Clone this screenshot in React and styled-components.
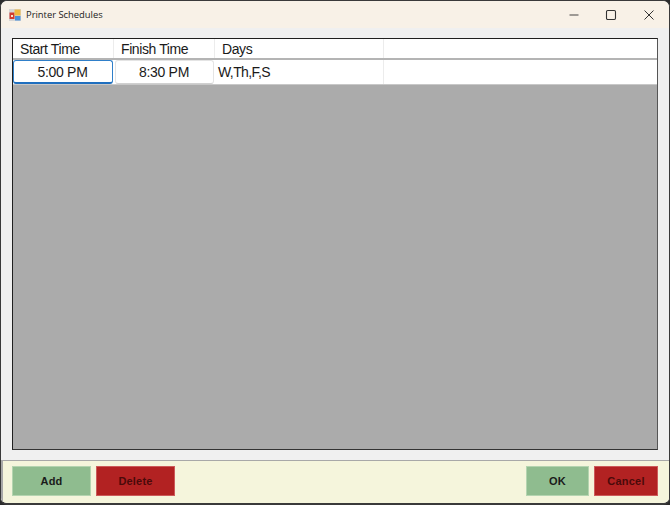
import React from 'react'
import styled, { createGlobalStyle } from 'styled-components'

const GlobalStyle = createGlobalStyle`
  html, body {
    margin: 0;
    padding: 0;
    background: #2b2b2b;
  }
  * {
    box-sizing: border-box;
  }
`

const columns = [
  { title: 'Start Time', width: 101 },
  { title: 'Finish Time', width: 101 },
  { title: 'Days', width: 169 },
  { title: '', width: null },
]

const App = () => {
  return (
    <>
      <GlobalStyle />
      <Window>
        <TitleBar>
          <AppIcon viewBox="0 0 12 12">
            <rect x="0" y="0" width="12" height="12" fill="#d6d6d6" />
            <rect x="0.5" y="3.5" width="5" height="6.5" fill="#d23b2e" />
            <rect x="2" y="6" width="2" height="2" fill="#f5e6d0" />
            <rect x="5.5" y="0.5" width="6" height="6" fill="#f0b840" />
            <rect x="6" y="7" width="5.5" height="4.5" fill="#4a90d9" />
          </AppIcon>
          <WindowTitle>Printer Schedules</WindowTitle>
          <Controls>
            <ControlButton $width={37}>
              <svg width="12" height="12" viewBox="0 0 12 12">
                <path d="M1.5 6h9" stroke="#444" strokeWidth="1.2" fill="none" />
              </svg>
            </ControlButton>
            <ControlButton $width={37}>
              <svg width="12" height="12" viewBox="0 0 12 12">
                <rect x="1.5" y="1.5" width="9" height="9" rx="1.2" stroke="#333" strokeWidth="1.1" fill="none" />
              </svg>
            </ControlButton>
            <ControlButton $width={40}>
              <svg width="12" height="12" viewBox="0 0 12 12">
                <path d="M1.5 1.5l9 9M10.5 1.5l-9 9" stroke="#333" strokeWidth="1" fill="none" />
              </svg>
            </ControlButton>
          </Controls>
        </TitleBar>
        <Body>
          <Grid>
            <HeaderRow>
              {columns.map((col, i) => (
                <HeaderCell key={i} $width={col.width}>
                  {col.title}
                </HeaderCell>
              ))}
            </HeaderRow>
            <DataRow>
              <TimeCell $width={101}>
                <TimeInput $focused>5:00 PM</TimeInput>
              </TimeCell>
              <TimeCell $width={101} $inset>
                <TimeInput>8:30 PM</TimeInput>
              </TimeCell>
              <TextCell $width={169}>W,Th,F,S</TextCell>
              <TextCell />
            </DataRow>
          </Grid>
        </Body>
        <Footer>
          <ButtonGroup>
            <ActionButton $kind="go" $width={79}>Add</ActionButton>
            <ActionButton $kind="stop" $width={79}>Delete</ActionButton>
          </ButtonGroup>
          <ButtonGroup>
            <ActionButton $kind="go" $width={63}>OK</ActionButton>
            <ActionButton $kind="stop" $width={64}>Cancel</ActionButton>
          </ButtonGroup>
        </Footer>
      </Window>
    </>
  )
}

export default App

const Window = styled.div`
  width: 670px;
  height: 505px;
  display: flex;
  flex-direction: column;
  background: #f0f0f0;
  border: 1px solid #3a3a3a;
  border-bottom-width: 2px;
  border-radius: 7px;
  overflow: hidden;
  font-family: "Liberation Sans", Arial, sans-serif;
`
const TitleBar = styled.div`
  height: 27px;
  flex: none;
  display: flex;
  align-items: center;
  padding-left: 8px;
  background: #f8f1e7;
`
const AppIcon = styled.svg`
  width: 12px;
  height: 12px;
  flex: none;
`
const WindowTitle = styled.div`
  margin-left: 5px;
  font-family: "Open Sans", "Liberation Sans", sans-serif;
  font-size: 9.4px;
  color: #222;
`
const Controls = styled.div`
  margin-left: auto;
  display: flex;
`
const ControlButton = styled.div`
  width: ${(p) => p.$width}px;
  height: 27px;
  display: flex;
  align-items: center;
  justify-content: center;
`
const Body = styled.div`
  flex: 1;
  padding: 10px 11px 10px 11px;
  display: flex;
`
const Grid = styled.div`
  flex: 1;
  background: #ababab;
  border: 1px solid #1f1f1f;
  border-right-color: #555;
  border-bottom-color: #333;
`
const HeaderRow = styled.div`
  height: 21px;
  display: flex;
  background: #fff;
  border-bottom: 2px solid #b4b4b4;
`
const HeaderCell = styled.div`
  ${(p) => (p.$width ? `width: ${p.$width}px;` : 'flex: 1;')}
  padding-left: 7px;
  border-right: 1px solid #ececec;
  font-size: 14px;
  letter-spacing: -0.4px;
  line-height: 20px;
  color: #1a1a1a;
  &:last-child {
    border-right: none;
  }
`
const DataRow = styled.div`
  height: 25px;
  display: flex;
  background: #fff;
  border-bottom: 1px solid #c8c8c8;
`
const TimeCell = styled.div`
  width: ${(p) => p.$width}px;
  padding: 0 1px 0 ${(p) => (p.$inset ? 1 : 0)}px;
  display: flex;
`
const TimeInput = styled.div`
  flex: 1;
  display: flex;
  align-items: center;
  justify-content: center;
  padding-right: 1px;
  font-size: 14px;
  letter-spacing: -0.3px;
  color: #1a1a1a;
  border: 1px solid ${(p) => (p.$focused ? '#2f7fc9' : '#e4e4e4')};
  border-bottom: ${(p) => (p.$focused ? '2px solid #1f6fbf' : '1px solid #d0d0d0')};
  border-radius: 3px;
`
const TextCell = styled.div`
  ${(p) => (p.$width ? `width: ${p.$width}px;` : 'flex: 1;')}
  padding-left: 3px;
  border-right: 1px solid #ececec;
  font-size: 14px;
  letter-spacing: -0.6px;
  line-height: 24px;
  color: #1a1a1a;
  &:last-child {
    border-right: none;
  }
`
const Footer = styled.div`
  height: 43px;
  flex: none;
  display: flex;
  align-items: center;
  justify-content: space-between;
  padding: 0 11px 2px 9px;
  background: #f5f5dc;
  border-top: 1px solid #a8a8a8;
  border-left: 2px solid #a8a8a8;
`
const ButtonGroup = styled.div`
  display: flex;
  gap: 5px;
`
const ActionButton = styled.div`
  width: ${(p) => p.$width}px;
  height: 30px;
  display: flex;
  align-items: center;
  justify-content: center;
  font-size: 11px;
  font-weight: 700;
  letter-spacing: 0.2px;
  color: ${(p) => (p.$kind === 'go' ? '#1a1a1a' : '#4a0a0a')};
  background: ${(p) => (p.$kind === 'go' ? '#8fbc8f' : '#b22222')};
  border: 1px solid ${(p) => (p.$kind === 'go' ? '#b4d4b0' : '#cc5a5a')};
`
